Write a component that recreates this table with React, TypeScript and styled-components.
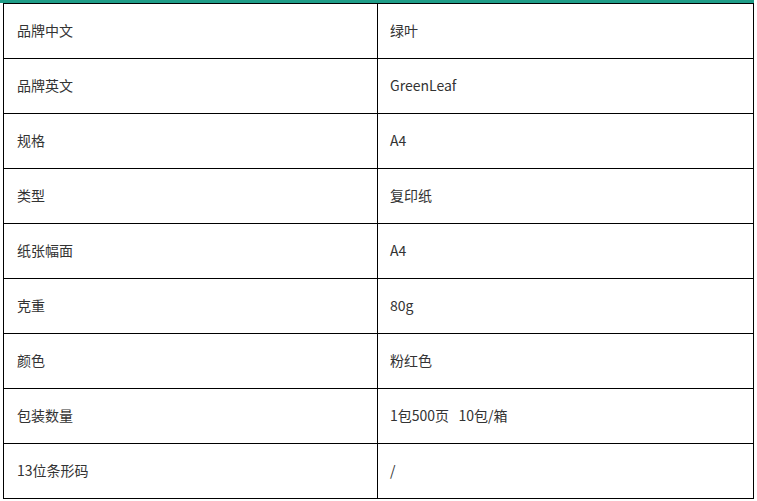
import React from "react";
import styled, { createGlobalStyle } from "styled-components";

const GlobalStyle = createGlobalStyle`
  body {
    margin: 0;
    background: #fff;
    font-family: "Noto Sans CJK SC", "Noto Sans", sans-serif;
  }
`;

const Wrapper = styled.div`
  width: 754px;
  border-top: 3px solid #1f9d88;
  padding-left: 3px;
  box-sizing: border-box;
`;

const SpecTable = styled.table`
  width: 751px;
  border-collapse: collapse;
  table-layout: fixed;
`;

const Row = styled.tr`
  height: 55px;
`;

const Cell = styled.td<{ $label?: boolean }>`
  border: 1px solid #000;
  padding: 0 0 2px ${(p) => (p.$label ? "13px" : "12px")};
  width: ${(p) => (p.$label ? "374px" : "auto")};
  font-size: 14px;
  color: #333;
  vertical-align: middle;
  box-sizing: border-box;
  white-space: pre;
`;

const specs: Array<[string, string]> = [
  ["品牌中文", "绿叶"],
  ["品牌英文", "GreenLeaf"],
  ["规格", "A4"],
  ["类型", "复印纸"],
  ["纸张幅面", "A4"],
  ["克重", "80g"],
  ["颜色", "粉红色"],
  ["包装数量", "1包500页   10包/箱"],
  ["13位条形码", "/"],
];

const App = () => {
  return (
    <>
      <GlobalStyle />
      <Wrapper>
        <SpecTable>
          <tbody>
            {specs.map(([label, value]) => (
              <Row key={label}>
                <Cell $label>{label}</Cell>
                <Cell>{value}</Cell>
              </Row>
            ))}
          </tbody>
        </SpecTable>
      </Wrapper>
    </>
  );
};

export default App;
